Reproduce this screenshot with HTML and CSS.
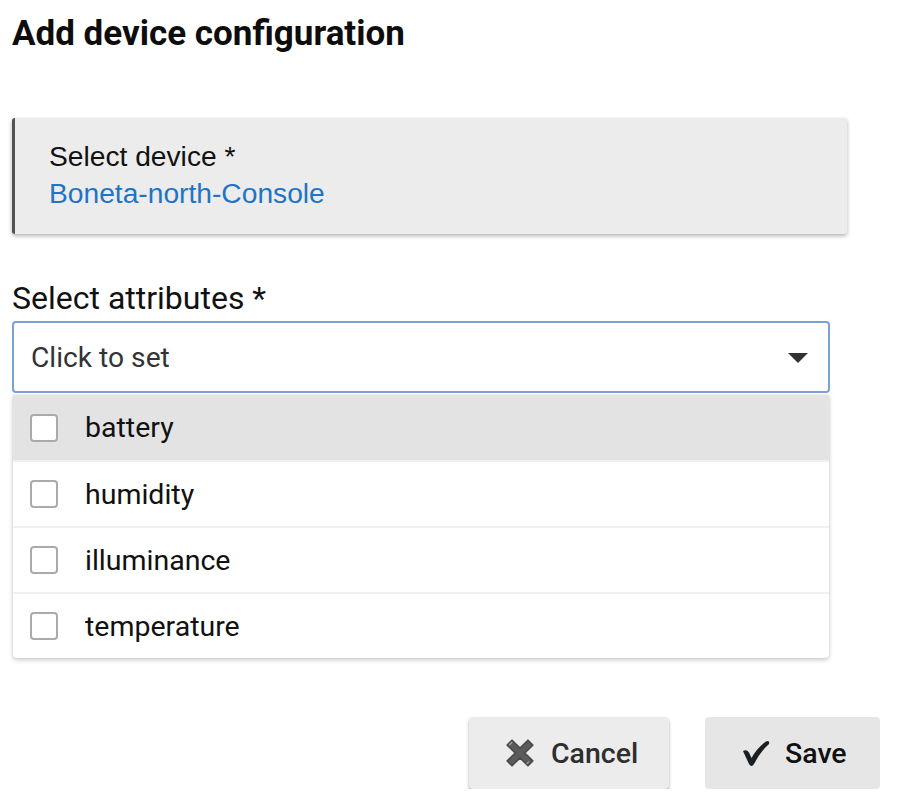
FILE: index.html
```html
<!DOCTYPE html>
<html>
<head>
<meta charset="utf-8">
<link rel="stylesheet" href="styles.css">
</head>
<body>
<div class="page">
  <h1 class="title">Add device configuration</h1>
  <div class="device-card">
    <div class="device-label">Select device *</div>
    <div class="device-value">Boneta-north-Console</div>
  </div>
  <div class="attr-label">Select attributes *</div>
  <div class="select-wrap">
    <div class="select-box">
      <span class="placeholder">Click to set</span>
      <span class="arrow"></span>
    </div>
    <ul class="menu">
      <li class="item active"><span class="check"></span><span>battery</span></li>
      <li class="item"><span class="check"></span><span>humidity</span></li>
      <li class="item"><span class="check"></span><span>illuminance</span></li>
      <li class="item"><span class="check"></span><span>temperature</span></li>
    </ul>
  </div>
  <div class="actions">
    <button class="btn cancel">
      <svg class="icon" width="34" height="34" viewBox="0 0 32 32">
        <path d="M4 8.5 L8.5 4 L16 11.5 L23.5 4 L28 8.5 L20.5 16 L28 23.5 L23.5 28 L16 20.5 L8.5 28 L4 23.5 L11.5 16 Z" fill="#5b5b5b" stroke="#4a4a4a" stroke-width="1.6" stroke-linejoin="round"/>
        <path d="M6.2 8.2 L8.3 6.1" stroke="#a0a0a0" stroke-width="1.4" stroke-linecap="round"/>
        <path d="M22.5 26 L24.2 24.3" stroke="#9a9a9a" stroke-width="1.2" stroke-linecap="round"/>
      </svg>
      <span>Cancel</span>
    </button>
    <button class="btn save">
      <svg class="icon" width="32" height="28" viewBox="0 0 32 28">
        <path d="M4 12 Q7.5 10 10 13.5 L12.5 19 Q18 9 27 2.5 Q31 1 30 5 Q21 13 15 25 Q12.5 29 10 25 Z" fill="#1a1f24"/>
      </svg>
      <span>Save</span>
    </button>
  </div>
</div>
</body>
</html>
```
FILE: styles.css
```css
* { box-sizing: border-box; }
html, body { margin: 0; padding: 0; background: #fff; }
body { font-family: Roboto, "Liberation Sans", sans-serif; color: #111; }
.page { padding: 12px 12px 0 12px; width: 908px; }
.title {
  margin: 0;
  font-size: 35px;
  font-weight: 700;
  line-height: 44px;
  color: #0d0d0d;
}
.device-card {
  margin-top: 62px;
  width: 835px;
  height: 116px;
  background: #ececec;
  border-left: 3px solid #525252;
  border-radius: 3px;
  box-shadow: 0 2px 4px rgba(0,0,0,0.3);
  padding: 20px 0 0 34px;
  font-family: "Liberation Sans", Arial, sans-serif;
  font-size: 28.2px;
}
.device-label { color: #111; line-height: 36px; }
.device-value { color: #1f74c4; line-height: 38px; }
.attr-label {
  margin-top: 46px;
  font-size: 32px;
  line-height: 36px;
  color: #111;
}
.select-wrap { width: 818px; margin-top: 5px; }
.select-box {
  height: 72px;
  border: 2px solid #7c9fd6;
  border-radius: 4px;
  display: flex;
  align-items: center;
  justify-content: space-between;
  padding: 0 20px 0 17px;
  background: #fff;
}
.placeholder { font-size: 28.2px; color: #333; }
.arrow {
  width: 0; height: 0;
  border-left: 10px solid transparent;
  border-right: 10px solid transparent;
  border-top: 10px solid #333;
  margin-top: 2px;
}
.menu {
  list-style: none;
  margin: 2px 1px 0 1px;
  padding: 0;
  background: #fff;
  border-radius: 0 0 4px 4px;
  box-shadow: 0 2px 5px rgba(0,0,0,0.2), 0 0 2px rgba(0,0,0,0.12);
}
.item {
  height: 66px;
  display: flex;
  align-items: center;
  padding-left: 17px;
  font-size: 28.5px;
  color: #111;
  border-top: 2px solid #f0f0f0;
}
.item:first-child { border-top: none; height: 65px; }
.item.active { background: #e3e3e3; }
.check {
  width: 28px; height: 28px;
  border: 2px solid #aaa;
  border-radius: 4px;
  background: #fff;
  margin-right: 27px;
}
.actions {
  display: flex;
  justify-content: flex-end;
  gap: 36px;
  margin-top: 59px;
  padding-right: 16px;
}
.btn {
  height: 72px;
  border: none;
  border-radius: 4px;
  font-family: Roboto, sans-serif;
  font-weight: 500;
  font-size: 28.5px;
  color: #222;
  display: flex;
  align-items: center;
  gap: 14px;
  padding: 0 0 0 34px;
}
.btn.cancel { background: #ececec; box-shadow: 0 2px 3px rgba(0,0,0,0.35); width: 200px; color: #2e2e2e; }
.btn.save { background: #e6e6e6; width: 175px; color: #111; }
```
